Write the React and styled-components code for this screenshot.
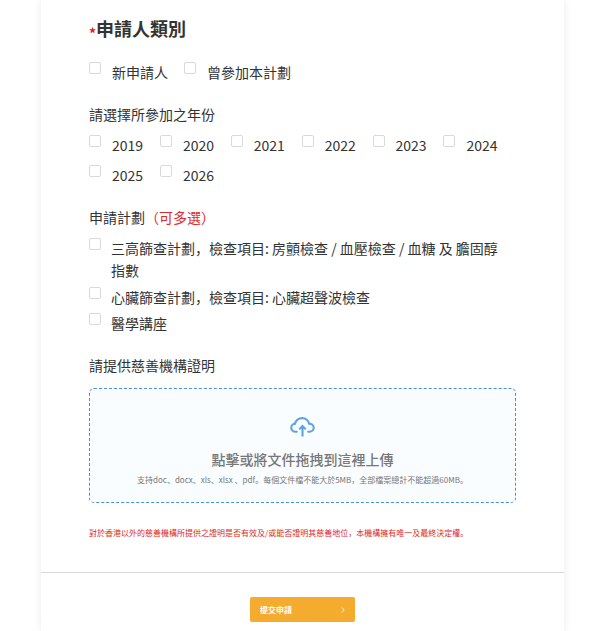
import { createGlobalStyle, styled } from "styled-components";

const GlobalStyle = createGlobalStyle`
  * {
    box-sizing: border-box;
  }
  html, body {
    margin: 0;
    height: 631px;
    overflow: hidden;
    background: #fff;
  }
  body {
    font-family: "Noto Sans CJK SC", "Noto Sans", sans-serif;
    color: #333;
  }
`;

const YEARS = ["2019", "2020", "2021", "2022", "2023", "2024", "2025", "2026"];

const PLANS = [
  { text: "三高篩查計劃，檢查項目: 房顫檢查 / 血壓檢查 / 血糖 及 膽固醇指數", after: 5 },
  { text: "心臟篩查計劃，檢查項目: 心臟超聲波檢查", after: 4 },
  { text: "醫學講座", after: 0 },
];

const CheckItem = ({ children, gap, after = 8, boxGap = 11 }) => {
  return (
    <Item $gap={gap} $after={after}>
      <Box $boxGap={boxGap} />
      <ItemText>{children}</ItemText>
    </Item>
  );
};

const CloudIcon = () => (
  <svg width="25" height="20" viewBox="0 0 26 21" fill="none">
    <path
      d="M7 15.5H5.8C3 15.5 1.2 13.5 1.2 11.2C1.2 8.9 3 7.1 5.2 7C5.9 3.6 9 1.2 12.6 1.2C16.3 1.2 19.3 3.7 20 7C22.6 7.1 24.8 8.9 24.8 11.3C24.8 13.6 23 15.5 20.2 15.5H19"
      stroke="#5ba4e0"
      strokeWidth="2.2"
      strokeLinecap="round"
    />
    <path
      d="M13 20.5V9.5M9.6 13L13 9.5L16.4 13"
      stroke="#5ba4e0"
      strokeWidth="2.2"
    />
  </svg>
);

const ChevronIcon = () => (
  <svg width="4" height="6" viewBox="0 0 4 6" fill="none">
    <path d="M0.7 0.6L3.2 3L0.7 5.4" stroke="#fff" strokeWidth="0.9" />
  </svg>
);

const App = () => {
  return (
    <>
      <GlobalStyle />
      <Card>
        <Body>
          <Heading>
            <Star>*</Star>申請人類別
          </Heading>
          <Options>
            <CheckItem gap={16}>新申請人</CheckItem>
            <CheckItem>曾參加本計劃</CheckItem>
          </Options>

          <Label>請選擇所參加之年份</Label>
          <Options>
            {YEARS.map((year) => (
              <CheckItem key={year} gap={16.8}>
                {year}
              </CheckItem>
            ))}
          </Options>

          <Label>
            申請計劃<Multi>（可多選）</Multi>
          </Label>
          <div>
            {PLANS.map((plan) => (
              <CheckItem key={plan.text} after={plan.after} boxGap={10}>
                {plan.text}
              </CheckItem>
            ))}
          </div>

          <ProofLabel>請提供慈善機構證明</ProofLabel>
          <Upload>
            <CloudIcon />
            <UploadTitle>點擊或將文件拖拽到這裡上傳</UploadTitle>
            <UploadHint>
              支持doc、docx、xls、xlsx 、pdf。每個文件檔不能大於5MB，全部檔案總計不能超過60MB。
            </UploadHint>
          </Upload>
          <Notice>
            對於香港以外的慈善機構所提供之證明是否有效及/或能否證明其慈善地位，本機構擁有唯一及最終決定權。
          </Notice>
        </Body>
        <Footer>
          <Submit>
            提交申請
            <ChevronIcon />
          </Submit>
        </Footer>
      </Card>
    </>
  );
};

export default App;

const Card = styled.div`
  width: 523px;
  height: 631px;
  margin-left: 41px;
  background: #fff;
  box-shadow: 0 0 8px rgba(0, 0, 0, 0.08);
  overflow: hidden;
`;

const Body = styled.div`
  padding: 15px 48px 0;
  height: 573px;
  border-bottom: 1px solid #d9d9d9;
`;

const Heading = styled.h2`
  margin: 0 0 20px;
  font-size: 18px;
  line-height: 26px;
  font-weight: 700;
  color: #333;
`;

const Star = styled.span`
  color: #e02020;
  font-size: 14px;
  vertical-align: -3px;
  line-height: 1;
`;

const Options = styled.div`
  display: flex;
  flex-wrap: wrap;
`;

const Item = styled.div`
  display: flex;
  align-items: flex-start;
  margin-right: ${(p) => p.$gap || 0}px;
  margin-bottom: ${(p) => p.$after}px;
`;

const Box = styled.span`
  flex: none;
  width: 12px;
  height: 12px;
  margin-top: 1px;
  margin-right: ${(p) => p.$boxGap}px;
  border: 1px solid #d9d9d9;
  border-radius: 2px;
  background: #fff;
`;

const ItemText = styled.span`
  max-width: 395px;
  font-size: 14px;
  line-height: 22px;
  color: #333;
`;

const Label = styled.div`
  margin-top: 12px;
  margin-bottom: 9px;
  font-size: 14px;
  line-height: 22px;
`;

const Multi = styled.span`
  color: #dc2a26;
`;

const ProofLabel = styled(Label)`
  margin-top: 20px;
  margin-bottom: 12px;
`;

const Upload = styled.div`
  height: 115px;
  padding-top: 28px;
  display: flex;
  flex-direction: column;
  align-items: center;
  background: #fafdff;
  border: 1px dashed #4a90e2;
  border-radius: 5px;
`;

const UploadTitle = styled.div`
  margin-top: 12px;
  font-size: 14px;
  line-height: 20px;
  font-weight: 500;
  color: #777;
`;

const UploadHint = styled.div`
  margin-top: 5px;
  font-size: 8px;
  line-height: 12px;
  color: #777;
`;

const Notice = styled.div`
  margin-top: 24px;
  font-size: 8px;
  line-height: 12px;
  color: #dc2a26;
`;

const Footer = styled.div`
  display: flex;
  justify-content: center;
  padding-top: 24px;
`;

const Submit = styled.button`
  width: 105px;
  height: 25px;
  padding: 0 10px;
  display: flex;
  align-items: center;
  justify-content: space-between;
  background: #f5ab2d;
  border: none;
  border-radius: 2px;
  font-family: inherit;
  font-size: 8px;
  font-weight: 700;
  color: #fff;
`;
